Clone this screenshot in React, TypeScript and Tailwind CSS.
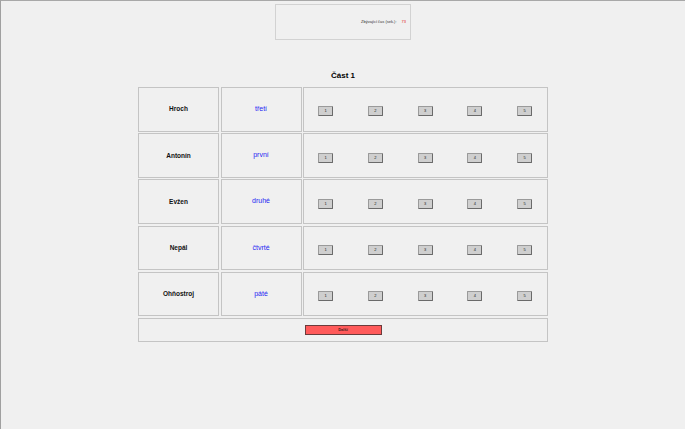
import React from 'react';

const rows = [
  { name: 'Hroch', word: 'třetí' },
  { name: 'Antonín', word: 'první' },
  { name: 'Evžen', word: 'druhé' },
  { name: 'Nepál', word: 'čtvrté' },
  { name: 'Ohňostroj', word: 'páté' },
];

export default function App() {
  return (
    <div
      className="h-screen w-full bg-[#f0f0f0] border-l border-t-[1.5px] border-l-[#a0a0a0] border-t-[#a8a8a8] pt-[3px]"
      style={{ fontFamily: '"Liberation Sans", Arial, sans-serif' }}
    >
      {/* timer box */}
      <div className="mx-auto w-[136px] h-[36px] border border-[#d2d2d2] flex items-center justify-end pr-[4px]">
        <span className="text-[4px] text-[#333]">Zbývající čas (sek.):</span>
        <span className="text-[4px] text-[#e02020] ml-[5px]">73</span>
      </div>

      <div className="mt-[31px] h-[10px] leading-[10px] text-center text-[8px] font-bold text-black">Část 1</div>

      <div className="mt-[6px] mx-auto w-[410px] grid grid-cols-[81px_81px_1fr] gap-[1.5px]">
        {rows.map((r) => (
          <React.Fragment key={r.name}>
            <div className="h-[44.7px] border border-[#c4c4c4] flex items-center justify-center text-[6.5px] font-bold text-[#111]">
              {r.name}
            </div>
            <div className="h-[44.7px] border border-[#c4c4c4] flex items-center justify-center text-[7px] text-[#2626f2]">
              {r.word}
            </div>
            <div className="h-[44.7px] border border-[#c4c4c4] flex items-center justify-between pt-[4px] pl-[14px] pr-[15px]">
              {[1, 2, 3, 4, 5].map((n) => (
                <button
                  key={n}
                  className="w-[15px] h-[10px] bg-[#cfcfcf] border border-[#6a6a6a] border-t-[#9a9a9a] border-l-[#9a9a9a] rounded-[1px] text-[4px] leading-none text-[#222] flex items-center justify-center"
                >
                  {n}
                </button>
              ))}
            </div>
          </React.Fragment>
        ))}
        <div className="col-span-3 h-[24px] border border-[#c4c4c4] flex items-center justify-center">
          <button className="w-[77px] h-[10px] bg-[#ff5a5a] border border-[#6b3b3b] text-[4px] font-bold leading-none text-[#3a1a1a] flex items-center justify-center">
            Další
          </button>
        </div>
      </div>
    </div>
  );
}
